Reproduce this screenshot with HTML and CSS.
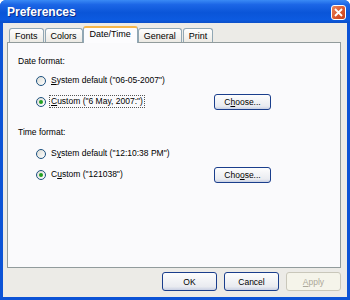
FILE: index.html
```html
<!DOCTYPE html>
<html>
	<head>
		<meta charset="UTF-8">
		<title>Preferences</title>
		<link rel="stylesheet" href="styles.css">
	</head>
	<body>
		<div class="window">
			<div class="titlebar">
				<span class="title">Preferences</span>
				<span class="close">
					<svg width="9" height="9" viewBox="0 0 9 9"><path d="M1 1L8 8M8 1L1 8" stroke="#fff" stroke-width="1.8"/></svg>
				</span>
			</div>
			<div class="client">
				<div class="tabs">
					<div class="tab">Fonts</div>
					<div class="tab">Colors</div>
					<div class="tab active">Date/Time</div>
					<div class="tab">General</div>
					<div class="tab">Print</div>
				</div>
				<div class="panel">
					<div class="group">
						<div class="label">Date format:</div>
						<div class="row">
							<span class="radio"></span>
							<span class="text"><u>S</u>ystem default ("06-05-2007")</span>
						</div>
						<div class="row">
							<span class="radio on"></span>
							<span class="text focus"><u>C</u>ustom ("6 May, 2007:")</span>
							<span class="btn choose">C<u>h</u>oose...</span>
						</div>
					</div>
					<div class="group">
						<div class="label">Time format:</div>
						<div class="row">
							<span class="radio"></span>
							<span class="text">S<u>y</u>stem default ("12:10:38 PM")</span>
						</div>
						<div class="row">
							<span class="radio on"></span>
							<span class="text">C<u>u</u>stom ("121038")</span>
							<span class="btn choose">Cho<u>o</u>se...</span>
						</div>
					</div>
				</div>
				<div class="buttons">
					<span class="btn">OK</span>
					<span class="btn">Cancel</span>
					<span class="btn disabled"><u>A</u>pply</span>
				</div>
			</div>
		</div>
	</body>
</html>
```

FILE: styles.css
```css
body{
	margin:0;
	font-family:"Liberation Sans", Arial, sans-serif;
	font-size:8.5px;
	color:#000;
}
.window{
	width:350px;
	height:300px;
	box-sizing:border-box;
	background:#0c53d6;
	padding:0 3px 3px 3px;
	display:flex;
	flex-direction:column;
	border-radius:6px 6px 0 0;
	overflow:hidden;
}
.titlebar{
	height:23px;
	margin:0 -3px;
	padding:0 4px 0 7px;
	display:flex;
	align-items:center;
	justify-content:space-between;
	background:linear-gradient(#3a8af5 0%, #1c66e6 20%, #0a55d8 55%, #0c5ae0 85%, #0b4fc8 100%);
}
.title{
	color:#fff;
	font-weight:bold;
	font-size:12px;
	text-shadow:1px 1px 0 #0a2c8c;
}
.close{
	width:15px;
	height:15px;
	box-sizing:border-box;
	border:1px solid #fff;
	border-radius:3px;
	background:linear-gradient(135deg, #e9865d 0%, #d8542b 60%, #c6401d 100%);
	display:flex;
	align-items:center;
	justify-content:center;
	margin-top:1px;
}
.client{
	flex:1;
	background:#ecebe7;
	padding:5px 6px 0 4px;
	display:flex;
	flex-direction:column;
}
.tabs{
	display:flex;
	align-items:flex-end;
	padding-left:2px;
	height:14px;
	position:relative;
	z-index:1;
}
.tab{
	height:14px;
	box-sizing:border-box;
	padding:2px 5px 0 5px;
	border:1px solid #91a7b4;
	border-bottom:none;
	border-radius:3px 3px 0 0;
	background:linear-gradient(#fefefe, #eceae4);
	margin-right:1px;
	line-height:10px;
	font-size:9px;
}
.tab.active{
	height:17px;
	margin-bottom:-1px;
	background:#fcfcfe;
	border-top:2px solid #f5b64a;
	padding:1px 6px 0 6px;
	margin-left:-1px;
	margin-right:0;
}
.panel{
	height:226px;
	box-sizing:border-box;
	border:1px solid #919b9c;
	background:#fafafc;
	padding:12px 0 0 10px;
}
.group{
	margin-bottom:18px;
}
.label{
	height:12px;
	line-height:12px;
	margin-bottom:7px;
}
.row{
	display:flex;
	align-items:center;
	height:13px;
	padding-left:18px;
	margin-bottom:8px;
}
.group + .group .label{
	margin-bottom:9px;
}
.radio{
	width:10px;
	height:10px;
	box-sizing:border-box;
	border:1px solid #1c5180;
	border-radius:50%;
	background:linear-gradient(135deg, #dcdcd5, #fff);
	margin-right:3px;
	display:flex;
	align-items:center;
	justify-content:center;
}
.radio.on::after{
	content:"";
	width:4px;
	height:4px;
	border-radius:50%;
	background:#21a121;
}
.text{
	padding:0 1px;
	line-height:11px;
	border:1px solid transparent;
}
.text.focus{
	border:1px dotted #555;
}
.btn{
	width:55px;
	height:17px;
	box-sizing:border-box;
	border:1px solid #1a3e8c;
	border-radius:3px;
	background:linear-gradient(#fdfdfd, #e9ebf0 80%, #c9d0e3);
	display:flex;
	align-items:center;
	justify-content:center;
}
.choose{
	margin-left:auto;
	margin-right:69px;
	width:57px;
	height:16px;
}
.buttons{
	display:flex;
	justify-content:flex-end;
	gap:7px;
	padding-top:4px;
}
.buttons .btn{
	height:19px;
}
.btn.disabled{
	border-color:#c9c7ba;
	background:#f5f4ea;
	color:#aca899;
}
```
